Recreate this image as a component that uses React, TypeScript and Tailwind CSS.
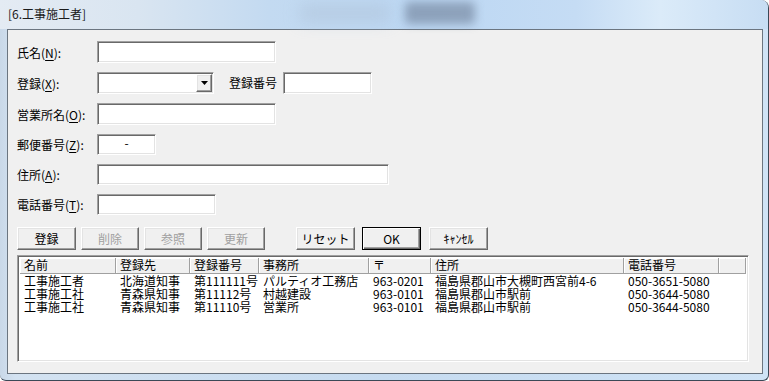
import React from 'react';

const font = "font-['Noto_Sans_CJK_JP','MS_UI_Gothic',sans-serif]";
const sunken =
  'bg-white border border-t-[#a0a0a0] border-l-[#a0a0a0] border-b-white border-r-white shadow-[inset_1px_1px_0_#696969,inset_-1px_-1px_0_#e3e3e3]';
const raised =
  'bg-[#f0f0f0] border border-t-white border-l-white border-b-[#696969] border-r-[#696969] shadow-[inset_-1px_-1px_0_#a0a0a0,inset_1px_1px_0_#e3e3e3]';

function Label({ text, accel, w = 'w-[80px]' }: { text: string; accel: string; w?: string }) {
  return (
    <span className={`${w} shrink-0 text-[12px] leading-[13px] text-black`}>
      {text}(<span className="underline underline-offset-2">{accel}</span>):
    </span>
  );
}

function Btn({ label, w = 'w-[59px]', disabled = false, primary = false }: { label: string; w?: string; disabled?: boolean; primary?: boolean }) {
  const cls = primary
    ? 'bg-[#f0f0f0] border border-black shadow-[inset_1px_1px_0_#fff,inset_-1px_-1px_0_#696969,inset_-2px_-2px_0_#a0a0a0]'
    : raised;
  return (
    <div className={`${w} h-[23px] shrink-0 flex items-center justify-center text-[12px] ${cls} ${disabled ? 'text-[#a0a0a0]' : 'text-black'}`}>
      {label}
    </div>
  );
}

const cols = [
  { name: '名前', w: 'w-[96px]' },
  { name: '登録先', w: 'w-[74px]' },
  { name: '登録番号', w: 'w-[69px]' },
  { name: '事務所', w: 'w-[110px]' },
  { name: '〒', w: 'w-[62px]' },
  { name: '住所', w: 'w-[193px]' },
  { name: '電話番号', w: 'w-[95px]' },
];

const rows = [
  ['工事施工者', '北海道知事', '第111111号', 'パルティオ工務店', '963-0201', '福島県郡山市大槻町西宮前4-6', '050-3651-5080'],
  ['工事施工社', '青森県知事', '第11112号', '村越建設', '963-0101', '福島県郡山市駅前', '050-3644-5080'],
  ['工事施工社', '青森県知事', '第11110号', '営業所', '963-0101', '福島県郡山市駅前', '050-3644-5080'],
];

export default function App() {
  return (
    <div className={`${font} w-[769px] h-[381px] overflow-hidden bg-white`}>
      <div className="relative w-[769px] h-[381px] flex flex-col rounded-tr-[8px] rounded-b-[6px] border-r border-b border-[#3b4856] bg-[linear-gradient(90deg,#c9d8e8_0%,#d3e2f1_2%,#c6dbf0_50%,#cfe3f6_100%)] overflow-hidden">
        {/* title bar */}
        <div className="relative h-[29px] shrink-0 bg-[linear-gradient(90deg,#e4ebf3_0%,#d9e5f1_18%,#c3daf1_35%,#bcd7f3_55%,#c5dcf4_75%,#dbebf9_86%,#c7ddf3_100%)]">
          <div className="absolute left-[405px] top-[2px] w-[70px] h-[22px] bg-[#6d7e96] opacity-60 blur-[5px] rounded" />
          <div className="absolute left-[300px] top-[4px] w-[90px] h-[18px] bg-[#b0c4da] opacity-60 blur-[8px]" />
          <span className="absolute left-[8px] top-[7px] text-[12px] leading-[14px] text-[#1b1b1b]">[6.工事施工者]</span>
        </div>
        {/* client area */}
        <div className="ml-[7px] mr-[6px] w-[756px] h-[345px] border border-[#6b7580] bg-[#f0f0f0] pl-[9px] pt-[11px] flex flex-col">
          <div className="flex flex-col gap-[9px]">
            <div className="flex items-center h-[22px]">
              <Label text="氏名" accel="N" />
              <div className={`w-[179px] h-[22px] ${sunken}`} />
            </div>
            <div className="flex items-center h-[22px]">
              <Label text="登録" accel="X" />
              <div className={`w-[117px] h-[22px] ${sunken} flex justify-end items-center pr-[1px]`}>
                <div className={`w-[16px] h-[18px] ${raised} flex items-center justify-center`}>
                  <svg width="7" height="4" viewBox="0 0 7 4"><path d="M0 0h7L3.5 4z" fill="#000" /></svg>
                </div>
              </div>
              <span className="ml-[15px] w-[54px] shrink-0 text-[12px] text-black">登録番号</span>
              <div className={`w-[89px] h-[22px] ${sunken}`} />
            </div>
            <div className="flex items-center h-[22px]">
              <Label text="営業所名" accel="O" />
              <div className={`w-[179px] h-[22px] ${sunken}`} />
            </div>
            <div className="flex items-center h-[21px]">
              <Label text="郵便番号" accel="Z" />
              <div className={`w-[59px] h-[21px] ${sunken} flex items-start justify-center text-[12px] leading-[14px] pt-[1px]`}>-</div>
            </div>
            <div className="flex items-center h-[21px]">
              <Label text="住所" accel="A" />
              <div className={`w-[292px] h-[21px] ${sunken}`} />
            </div>
            <div className="flex items-center h-[21px]">
              <Label text="電話番号" accel="T" />
              <div className={`w-[119px] h-[21px] ${sunken}`} />
            </div>
          </div>

          <div className="flex mt-[12px]">
            <Btn label="登録" />
            <div className="ml-[5px]"><Btn label="削除" w="w-[58px]" disabled /></div>
            <div className="ml-[5px]"><Btn label="参照" w="w-[58px]" disabled /></div>
            <div className="ml-[5px]"><Btn label="更新" w="w-[58px]" disabled /></div>
            <div className="ml-[31px]"><Btn label="リセット" /></div>
            <div className="ml-[7px]"><Btn label="OK" primary /></div>
            <div className="ml-[8px]"><Btn label="ｷｬﾝｾﾙ" /></div>
          </div>

          <div className={`mt-[5px] w-[732px] h-[107px] ${sunken} p-[2px] overflow-hidden`}>
            <div className="flex h-[16px] text-[12px] leading-[14px] text-black">
              {cols.map((c) => (
                <div key={c.name} className={`${c.w} shrink-0 h-[16px] pl-[4px] bg-[#f0f0f0] border-r border-b border-r-[#a0a0a0] border-b-[#a0a0a0] shadow-[inset_1px_1px_0_#fff]`}>
                  {c.name}
                </div>
              ))}
              <div className="flex-1 h-[16px] bg-[#f0f0f0] border-r border-b border-r-[#a0a0a0] border-b-[#a0a0a0] shadow-[inset_1px_1px_0_#fff]" />
            </div>
            <div>
              {rows.map((r, i) => (
                <div key={i} className="flex h-[13px] text-[12px] leading-[13px] text-black">
                  {r.map((v, j) => (
                    <div key={j} className={`${cols[j].w} shrink-0 pl-[4px] whitespace-nowrap`}>{v}</div>
                  ))}
                </div>
              ))}
            </div>
          </div>
        </div>
      </div>
    </div>
  );
}
